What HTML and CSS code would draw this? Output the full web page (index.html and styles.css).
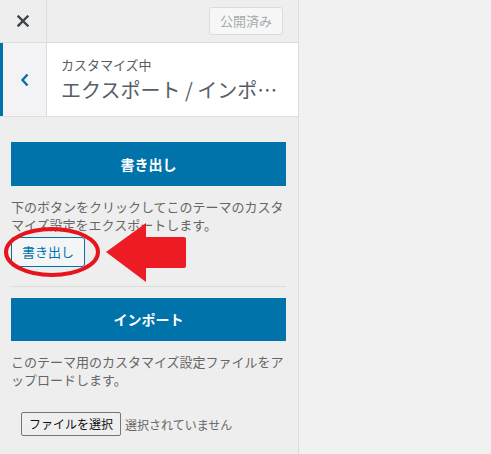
FILE: index.html
```html
<!DOCTYPE html>
<html lang="ja">
<head>
<meta charset="utf-8">
<link rel="stylesheet" href="styles.css">
</head>
<body>
<div class="page">
  <aside class="sidebar">
    <header class="topbar">
      <div class="close">
        <svg width="12" height="12" viewBox="0 0 12 12"><path d="M1.5 1.5 L10.5 10.5 M10.5 1.5 L1.5 10.5" stroke="#3c434a" stroke-width="2.4" stroke-linecap="square"/></svg>
      </div>
      <div class="publish">公開済み</div>
    </header>
    <div class="section-head">
      <div class="back">
        <svg width="10" height="14" viewBox="0 0 10 14"><path d="M7.5 1.5 L2.5 7 L7.5 12.5" fill="none" stroke="#0073aa" stroke-width="2.4"/></svg>
      </div>
      <div class="titles">
        <div class="sub">カスタマイズ中</div>
        <div class="title">エクスポート / インポート</div>
      </div>
    </div>
    <div class="content">
      <div class="primary">書き出し</div>
      <p class="desc first">下のボタンをクリックしてこのテーマのカスタマイズ設定をエクスポートします。</p>
      <div class="secondary">書き出し</div>
      <hr class="sep">
      <div class="primary import">インポート</div>
      <p class="desc">このテーマ用のカスタマイズ設定ファイルをアップロードします。</p>
      <div class="file">
        <span class="file-btn">ファイルを選択</span>
        <span class="file-text">選択されていません</span>
      </div>
    </div>
    <svg class="annot" width="298" height="454" viewBox="0 0 298 454">
      <ellipse cx="52" cy="252" rx="46" ry="23" fill="none" stroke="#e8141c" stroke-width="4"/>
      <path d="M106 252 L146 223 L146 237 L184 237 Q186 237 186 239 L186 266 Q186 268 184 268 L146 268 L146 282 Z" fill="#ed1c24"/>
    </svg>
  </aside>
  <main class="preview"></main>
</div>
</body>
</html>
```

FILE: styles.css
```css
html, body {
  margin: 0;
  padding: 0;
}
body {
  background: #f1f1f1;
  font-family: "Noto Sans CJK JP", "Noto Sans", sans-serif;
  font-size: 13px;
  color: #555d66;
}
.page {
  display: flex;
  width: 491px;
  height: 454px;
  overflow: hidden;
}
.sidebar {
  position: relative;
  width: 298px;
  flex: 0 0 298px;
  background: #eeeeee;
  border-right: 1px solid #dddddd;
  box-sizing: content-box;
}
.preview {
  flex: 1;
  background: #f1f1f1;
}
.topbar {
  display: flex;
  align-items: center;
  height: 42px;
  border-bottom: 1px solid #dddddd;
}
.close {
  width: 46px;
  height: 42px;
  border-right: 1px solid #dddddd;
  display: flex;
  align-items: center;
  justify-content: center;
}
.publish {
  margin-left: auto;
  margin-right: 15px;
  width: 72px;
  height: 26px;
  border: 1px solid #dcdcde;
  border-radius: 3px;
  background: #f6f7f7;
  color: #a7aaad;
  font-size: 13px;
  line-height: 26px;
  text-align: center;
}
.section-head {
  display: flex;
  height: 73px;
  border-bottom: 1px solid #dddddd;
  background: #ffffff;
}
.back {
  width: 43px;
  border-left: 3px solid #0073aa;
  border-right: 1px solid #dddddd;
  background: #f3f3f5;
  display: flex;
  align-items: center;
  justify-content: center;
}
.titles {
  flex: 1;
  min-width: 0;
  padding: 13px 14px 0 14px;
}
.sub {
  font-size: 13px;
  line-height: 18px;
  color: #555d66;
}
.title {
  font-size: 20px;
  line-height: 28px;
  color: #555d66;
  white-space: nowrap;
  overflow: hidden;
  text-overflow: ellipsis;
  margin-top: 2px;
}
.content {
  padding: 25px 12px 0 11px;
}
.primary {
  height: 44px;
  background: #0073aa;
  color: #ffffff;
  font-weight: bold;
  font-size: 14px;
  line-height: 44px;
  text-align: center;
}
.desc {
  margin: 12px 0 0 0;
  font-size: 13px;
  line-height: 18px;
  color: #666666;
}
.secondary {
  display: inline-block;
  margin-top: 3px;
  width: 72px;
  height: 28px;
  border: 1px solid #0073aa;
  border-radius: 3px;
  background: #f3f5f6;
  color: #0073aa;
  font-size: 13px;
  line-height: 28px;
  text-align: center;
  vertical-align: top;
}
.sep {
  margin: 19px 0 0 0;
  border: 0;
  border-top: 1px solid #dddddd;
  height: 0;
}
.import {
  margin-top: 11px;
  height: 43px;
  line-height: 43px;
}
.file {
  display: flex;
  align-items: center;
  margin: 23px 0 0 10px;
}
.file-btn {
  height: 22px;
  padding: 0 7px;
  border: 1px solid #767676;
  border-radius: 2px;
  background: #efefef;
  color: #111111;
  font-size: 12px;
  line-height: 22px;
}
.file-text {
  margin-left: 4px;
  color: #666666;
  font-size: 12px;
}
.annot {
  position: absolute;
  left: 0;
  top: 0;
  pointer-events: none;
}
```
